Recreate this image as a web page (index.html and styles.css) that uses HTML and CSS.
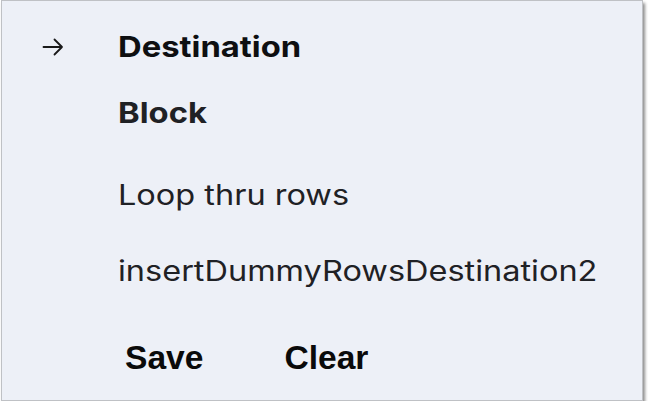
FILE: index.html
```html
<!DOCTYPE html>
<html>
<head>
<meta charset="utf-8">
<link rel="stylesheet" href="styles.css">
</head>
<body>
<div class="card">
  <div class="row row-dest">
    <span class="icon">
      <svg width="22" height="18" viewBox="0 0 22 18"><path d="M1.5 9 H20 M12.5 1.5 L20 9 L12.5 16.5" fill="none" stroke="#1a1a1a" stroke-width="1.8" stroke-linecap="round" stroke-linejoin="round"/></svg>
    </span>
    <span class="title title-dest">Destination</span>
  </div>
  <div class="row row-block">
    <span class="icon"></span>
    <span class="title title-block">Block</span>
  </div>
  <div class="row row-loop">
    <span class="icon"></span>
    <span class="item">Loop thru rows</span>
  </div>
  <div class="row row-insert">
    <span class="icon"></span>
    <span class="item">insertDummyRowsDestination2</span>
  </div>
  <div class="actions">
    <button class="btn">Save</button>
    <button class="btn">Clear</button>
  </div>
</div>
</body>
</html>
```
FILE: styles.css
```css
html, body {
  margin: 0;
  padding: 0;
  background: #ffffff;
}
.card {
  box-sizing: border-box;
  margin: 0 0 0 1px;
  width: 642px;
  height: 401px;
  background: #edf0f7;
  border: 1px solid #bfc1c5;
  box-shadow: 2px 3px 3px rgba(0, 0, 0, 0.45);
  font-family: Inter, "Noto Sans", sans-serif;
  color: #1f2125;
  display: flex;
  flex-direction: column;
  padding-top: 29px;
}
.row {
  display: flex;
  align-items: center;
}
.icon {
  width: 116px;
  padding-left: 40px;
  box-sizing: border-box;
  display: flex;
  align-items: center;
  flex-shrink: 0;
}
.title,
.item {
  display: inline-block;
  transform-origin: left center;
  white-space: nowrap;
}
.title {
  font-weight: 700;
  font-size: 29px;
  line-height: 34px;
  transform: scaleX(1.13);
}
.title-dest {
  color: #0e0f11;
}
.row-block {
  margin-top: 32px;
}
.item {
  font-size: 28px;
  line-height: 34px;
  font-weight: 400;
  transform: scaleX(1.16);
}
.row-loop {
  margin-top: 48px;
}
.row-insert {
  margin-top: 42px;
}
.actions {
  display: flex;
  gap: 81px;
  padding-left: 123px;
  margin-top: 51px;
}
.btn {
  border: none;
  background: transparent;
  padding: 0;
  font-family: "Liberation Sans", Arial, sans-serif;
  font-weight: 700;
  font-size: 33.6px;
  line-height: 38px;
  color: #0a0a0a;
  cursor: pointer;
}
```
